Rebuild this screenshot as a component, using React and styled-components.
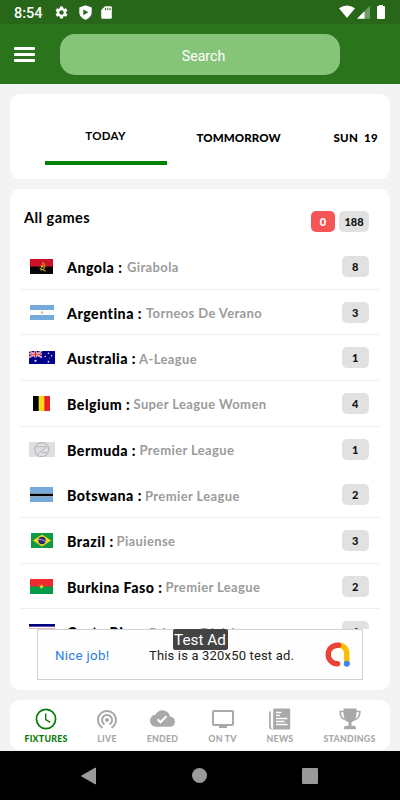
import React from 'react';
import styled, { createGlobalStyle } from 'styled-components';
import { MdSettings, MdCloudDone, MdWifiTethering, MdTv } from 'react-icons/md';

const games = [
  { country: 'Angola', league: 'Girabola', count: 8, flag: 'angola', countryWidth: 56 },
  { country: 'Argentina', league: 'Torneos De Verano', count: 3, flag: 'argentina', countryWidth: 75 },
  { country: 'Australia', league: 'A-League', count: 1, flag: 'australia', countryWidth: 68 },
  { country: 'Belgium', league: 'Super League Women', count: 4, flag: 'belgium', countryWidth: 62.5 },
  { country: 'Bermuda', league: 'Premier League', count: 1, flag: 'none', countryWidth: 68.5, noLine: true },
  { country: 'Botswana', league: 'Premier League', count: 2, flag: 'botswana', countryWidth: 74 },
  { country: 'Brazil', league: 'Piauiense', count: 3, flag: 'brazil', countryWidth: 45.5 },
  { country: 'Burkina Faso', league: 'Premier League', count: 2, flag: 'burkina', countryWidth: 94.5 },
  { country: 'Costa Rica', league: 'Primera Division', count: 4, flag: 'costarica', countryWidth: 78 },
]

const Flag = ({ name }) => {
  switch (name) {
    case 'angola':
      return (
        <svg width="23" height="15" viewBox="0 0 23 15">
          <rect width="23" height="15" fill="#080606" />
          <rect width="23" height="7.5" fill="#ce1126" />
          <path d="M12 3.6a3.7 3.7 0 1 1-1.7 7.200M9.800 9.200l5.800 3" fill="none" stroke="#c99b16" strokeWidth="1.1" />
          <path d="M12.200 5.200l.6 1.300 1.400.1-1 1 .3 1.400-1.300-.7-1.200.7.2-1.400-1-1 1.400-.1z" fill="#e5b51d" />
        </svg>
      )
    case 'argentina':
      return (
        <svg width="24" height="15" viewBox="0 0 24 15">
          <rect width="24" height="15" fill="#75aadb" />
          <rect y="5" width="24" height="5" fill="#fff" />
          <circle cx="12" cy="7.5" r="1.2" fill="#e9b45b" />
        </svg>
      )
    case 'australia':
      return (
        <svg width="26" height="13" viewBox="0 0 26 13">
          <rect width="26" height="13" fill="#00008b" />
          <path d="M0 0l13 6.5M13 0L0 6.5" stroke="#fff" strokeWidth="1.4" />
          <path d="M0 0l13 6.5M13 0L0 6.5" stroke="#d22" strokeWidth=".6" />
          <path d="M6.5 0v6.5M0 3.25h13" stroke="#fff" strokeWidth="2.2" />
          <path d="M6.5 0v6.5M0 3.25h13" stroke="#e01c2c" strokeWidth="1.2" />
          <g fill="#e6e6fa">
            <circle cx="6.5" cy="9.8" r="1.1" />
            <circle cx="19.5" cy="2.3" r=".8" />
            <circle cx="16.3" cy="5.5" r=".8" />
            <circle cx="22.6" cy="4.7" r=".8" />
            <circle cx="20.7" cy="7" r=".5" />
            <circle cx="19.5" cy="10.7" r=".9" />
          </g>
        </svg>
      )
    case 'belgium':
      return (
        <svg width="17" height="15" viewBox="0 0 17 15">
          <rect width="6" height="15" fill="#000" />
          <rect x="5.7" width="6" height="15" fill="#fbdc13" />
          <rect x="11.3" width="5.7" height="15" fill="#ee2023" />
        </svg>
      )
    case 'botswana':
      return (
        <svg width="23" height="15" viewBox="0 0 23 15">
          <rect width="23" height="15" fill="#75aadb" />
          <rect y="6" width="23" height="4" fill="#b9d0e6" />
          <rect y="6.7" width="23" height="2.5" fill="#000" />
        </svg>
      )
    case 'brazil':
      return (
        <svg width="22" height="15" viewBox="0 0 22 15">
          <rect width="22" height="15" fill="#109a43" />
          <path d="M11 1.6l9 5.9-9 5.9-9-5.9z" fill="#f7d823" />
          <circle cx="11" cy="7.5" r="3.7" fill="#2c2a75" />
          <path d="M7.6 6.5q4-.6 6.8 2.2" fill="none" stroke="#c5cde0" strokeWidth=".8" />
        </svg>
      )
    case 'burkina':
      return (
        <svg width="23" height="15" viewBox="0 0 23 15">
          <rect width="23" height="15" fill="#009e49" />
          <rect width="23" height="7.5" fill="#ef2b2d" />
          <path d="M11.5 5l.7 1.8h1.8l-1.4 1.2.5 1.8-1.6-1.1-1.6 1.1.5-1.8L9 6.8h1.8z" fill="#fcd116" />
        </svg>
      )
    case 'costarica':
      return (
        <svg width="26" height="15" viewBox="0 0 26 15">
          <rect width="26" height="15" fill="#00007f" />
          <rect y="2.7" width="26" height="9.6" fill="#fff" />
          <rect y="4.7" width="26" height="5.6" fill="#d90012" />
        </svg>
      )
    default:
      return (
        <svg width="26" height="15" viewBox="0 0 26 15">
          <rect width="26" height="15" fill="#dedfe1" />
          <circle cx="12.8" cy="7.6" r="7" fill="none" stroke="#b7b8ba" strokeWidth="1.2" />
          <path d="M7.400 4.700h10.200L8.300 12.200M12 10.600h6" fill="none" stroke="#b7b8ba" strokeWidth="1" />
        </svg>
      )
  }
}

const ClockIcon = () => (
  <svg width="22" height="22" viewBox="0 0 22 22" fill="none" stroke="currentColor">
    <circle cx="11" cy="11" r="9.6" strokeWidth="1.7" />
    <path d="M10.7 5.6v6l4.6 2.7" strokeWidth="1.4" />
  </svg>
)

const NewsIcon = () => (
  <svg width="22" height="22" viewBox="0 0 22 22">
    <path d="M.9 3.6v15.1c0 1 .8 1.8 1.8 1.8" fill="none" stroke="currentColor" strokeWidth="1.7" />
    <path d="M5.2.5h15a1 1 0 0 1 1 1v18.9a1 1 0 0 1-1 1H3.2a2 2 0 0 0 1-1.7V1.5a1 1 0 0 1 1-1z" fill="currentColor" />
    <path d="M7 4.5h5.5M7 7.3h4M7 10.5h11.5M7 13.5h8.5M7 16.5h11.5" stroke="#fff" strokeWidth="1.3" />
  </svg>
)

const TrophyIcon = () => (
  <svg width="22" height="22" viewBox="0 0 22 22" fill="none" stroke="currentColor">
    <path d="M4.5.6h13v4.2c0 4.500-1.800 8.400-5 9.500v3.500h2.400c1.400 0 2.300 1.200 2.300 3.500H4.800c0-2.300.9-3.500 2.300-3.500h2.400v-3.500c-3.200-1.100-5-5-5-9.500z" fill="currentColor" stroke="none" />
    <path d="M5 3.500H1.100c0 4.300 2 7.500 6 8.500M17 3.500h3.900c0 4.300-2 7.500-6 8.500" strokeWidth="1.6" />
  </svg>
)

const ShieldIcon = () => (
  <svg width="13" height="15" viewBox="0 0 13 15">
    <path d="M6.5.2l6.200 2.400v4.600c0 3.500-2.500 6.200-6.200 7.500C2.800 13.400.3 10.700.3 7.200V2.600z" fill="#fff" />
    <path d="M4.3 4.4v5.800l5-2.900z" fill="#28671a" />
  </svg>
)

const SdIcon = () => (
  <svg width="11" height="13" viewBox="0 0 11 13">
    <path d="M4 .2h5.800q1 0 1 1v10.600q0 1-1 1H1.200q-1 0-1-1V4z" fill="#fff" />
    <path d="M4.600 1.800v2.500M6.800 1.800v2.500M9 1.800v2.500" stroke="#28671a" strokeWidth="1" />
  </svg>
)

const AdLogo = () => (
  <svg width="25" height="25" viewBox="0 0 25 25" fill="none" strokeWidth="5.4" strokeLinecap="round">
    <path d="M14 3.2a7.800 7.800 0 0 1 7.800 7.800v10.500" stroke="#fbbc04" />
    <path d="M13.500 3.200h-1a9.300 9.300 0 0 0 0 18.600" stroke="#ea4335" />
    <circle cx="21.800" cy="21.700" r="3" fill="#4285f4" />
  </svg>
)

const tabs = [
  { label: 'FIXTURES', icon: <ClockIcon />, width: 43, active: true },
  { label: 'LIVE', icon: <MdWifiTethering size={24} />, width: 20 },
  { label: 'ENDED', icon: <MdCloudDone size={25} />, width: 32 },
  { label: 'ON TV', icon: <MdTv size={24} />, width: 29 },
  { label: 'NEWS', icon: <NewsIcon />, width: 27 },
  { label: 'STANDINGS', icon: <TrophyIcon />, width: 53 },
]

const App = () => {
  return (
    <Screen>
      <GlobalStyle />
      <StatusBar>
        <Time>8:54</Time>
        <StatusIcons>
          <MdSettings size={15} />
          <ShieldIcon />
          <SdIcon />
        </StatusIcons>
        <svg width="48" height="15" viewBox="0 0 48 15">
          <path d="M0 3.2Q8 -2 16 3.2L8 13z" fill="#fff" />
          <path d="M31 .8v13H18z" fill="#6f9b66" />
          <path d="M25.5 6.300v7.500H18z" fill="#fff" />
          <path d="M40 1V0h4v1h1q1 0 1 1v11q0 1-1 1h-6q-1 0-1-1V2q0-1 1-1z" fill="#fff" />
        </svg>
      </StatusBar>
      <Header>
        <MenuButton>
          <MenuLine />
          <MenuLine />
          <MenuLine />
        </MenuButton>
        <SearchBox>Search</SearchBox>
      </Header>
      <Content>
        <DaysCard>
          <DayActive>TODAY</DayActive>
          <Day>TOMMORROW</Day>
          <Day>SUN&nbsp; 19</Day>
        </DaysCard>
        <GamesCard>
          <GamesHeader>
            <Title>All games</Title>
            <Badge $live>0</Badge>
            <Badge $wide>188</Badge>
          </GamesHeader>
          <GamesList>
            {games.map((game) => (
              <GameRow key={game.country} $noLine={game.noLine}>
                <FlagBox><Flag name={game.flag} /></FlagBox>
                <Country $width={game.countryWidth}>{game.country} :</Country>
                <League>{game.league}</League>
                <Badge>{game.count}</Badge>
              </GameRow>
            ))}
          </GamesList>
          <Ad>
            <AdLabel>Test Ad</AdLabel>
            <AdPraise>Nice job!</AdPraise>
            <AdText>This is a 320x50 test ad.</AdText>
            <AdLogo />
          </Ad>
        </GamesCard>
        <TabBar>
          {tabs.map((tab) => (
            <Tab key={tab.label} $width={tab.width} $active={tab.active}>
              <TabIcon>{tab.icon}</TabIcon>
              <TabLabel>{tab.label}</TabLabel>
            </Tab>
          ))}
        </TabBar>
      </Content>
      <SystemNav>
        <svg width="15" height="18" viewBox="0 0 15 18"><path d="M14.5 1v16L.5 9z" fill="#9a9a9a" stroke="#9a9a9a" strokeLinejoin="round" /></svg>
        <HomeDot />
        <RecentSquare />
      </SystemNav>
    </Screen>
  )
}

const GlobalStyle = createGlobalStyle`
  * {
    box-sizing: border-box;
  }
  body {
    margin: 0;
    overflow: hidden;
    font-family: Lato, sans-serif;
  }
  svg {
    display: block;
    flex-shrink: 0;
  }
`

const Screen = styled.div`
  width: 400px;
  height: 800px;
  display: flex;
  flex-direction: column;
  background: #f3f3f3;
`

const StatusBar = styled.div`
  height: 24px;
  padding: 1px 13px 0 14px;
  display: flex;
  align-items: center;
  background: #28671a;
  color: #fff;
`

const Time = styled.span`
  width: 40px;
  padding-top: 1px;
  font: 500 14.5px Roboto, sans-serif;
`

const StatusIcons = styled.div`
  flex: 1;
  display: flex;
  align-items: center;
  gap: 9.5px;
`

const Header = styled.div`
  height: 60px;
  padding: 0 14px;
  display: flex;
  align-items: center;
  background: #2a741c;
`

const MenuButton = styled.div`
  width: 46px;
  display: flex;
  flex-direction: column;
  gap: 3px;
`

const MenuLine = styled.div`
  width: 21px;
  height: 3px;
  border-radius: 1px;
  background: #fff;
`

const SearchBox = styled.div`
  width: 280px;
  height: 41px;
  padding: 4px 0 0 7px;
  display: flex;
  align-items: center;
  justify-content: center;
  border-radius: 15px;
  background: #86c47a;
  color: #fff;
  font: 14.2px Roboto, sans-serif;
`

const Content = styled.div`
  height: 667px;
  padding: 10px 10px 0;
  display: flex;
  flex-direction: column;
  gap: 10px;
`

const Card = styled.div`
  flex-shrink: 0;
  border-radius: 10px;
  background: #fff;
`

const DaysCard = styled(Card)`
  height: 85px;
  padding-left: 34.5px;
  display: flex;
  align-items: center;
  overflow: hidden;
  white-space: nowrap;
`

const Day = styled.div`
  width: 137px;
  margin-left: 30px;
  padding-top: 2px;
  color: #000;
  font-size: 11.5px;
  font-weight: 900;
  letter-spacing: .1px;
  flex-shrink: 0;

  & + & {
    margin-left: 0;
    letter-spacing: .25px;
  }
`

const DayActive = styled.div`
  width: 122px;
  height: 54px;
  margin-bottom: -2px;
  padding-top: 18px;
  border-bottom: 4px solid #008000;
  font-size: 11.5px;
  font-weight: 700;
  letter-spacing: .3px;
  text-align: center;
  flex-shrink: 0;
`

const GamesCard = styled(Card)`
  height: 501px;
  display: flex;
  flex-direction: column;
`

const GamesHeader = styled.div`
  height: 55px;
  padding: 9px 21px 0 14px;
  display: flex;
  align-items: center;
  gap: 4px;
`

const Title = styled.div`
  flex: 1;
  margin-top: -7px;
  font-size: 14.5px;
  font-weight: 700;
  letter-spacing: .45px;
`

const Badge = styled.div`
  width: ${props => props.$live ? '24px' : props.$wide ? '30px' : '26.5px'};
  height: 21px;
  display: flex;
  align-items: center;
  justify-content: center;
  border-radius: 5px;
  background: ${props => props.$live ? '#f65555' : '#e1e1e1'};
  color: ${props => props.$live ? '#fff' : '#111'};
  font-size: 11px;
  font-weight: 900;
  flex-shrink: 0;
`

const GamesList = styled.div`
  height: 385px;
  overflow: hidden;
`

const GameRow = styled.div`
  height: 45.68px;
  margin: 0 10px;
  padding-right: 11.5px;
  display: flex;
  align-items: center;
  border-bottom: 1px solid ${props => props.$noLine ? 'transparent' : '#efefef'};
  white-space: nowrap;
`

const FlagBox = styled.div`
  width: 43px;
  height: 15px;
  margin-right: 4px;
  display: flex;
  align-items: center;
  justify-content: center;
`

const Country = styled.div`
  width: ${props => props.$width + 4}px;
  padding-top: 2px;
  color: #000;
  font-size: 14.2px;
  font-weight: 900;
  letter-spacing: .48px;
`

const League = styled.div`
  flex: 1;
  padding-top: 2px;
  color: #9b9b9b;
  font-size: 13px;
  font-weight: 700;
  letter-spacing: .38px;
`

const Ad = styled.div`
  position: relative;
  width: 326px;
  height: 51px;
  margin: 0 auto;
  padding: 0 12px 0 17px;
  display: flex;
  align-items: center;
  border: 1px solid #ccd4d8;
  background: #fefefe;
  font-family: Roboto, sans-serif;
`

const AdLabel = styled.div`
  position: absolute;
  top: -1px;
  left: 134.5px;
  width: 55px;
  height: 21px;
  border-radius: 2px;
  background: #444;
  color: #fff;
  font-size: 15.3px;
  line-height: 22px;
  text-align: center;
`

const AdPraise = styled.div`
  width: 94px;
  padding-top: 2px;
  color: #2b7de9;
  font-size: 13.3px;
  letter-spacing: .3px;
`

const AdText = styled.div`
  flex: 1;
  padding-top: 2px;
  color: #222;
  font-size: 13px;
  letter-spacing: .17px;
  white-space: nowrap;
`

const TabBar = styled(Card)`
  height: 50px;
  padding-left: 14.5px;
  display: flex;
  gap: 29.5px;
`

const Tab = styled.div`
  width: ${props => props.$width}px;
  display: flex;
  flex-direction: column;
  align-items: center;
  color: ${props => props.$active ? '#087a08' : '#a9a9a9'};
`

const TabIcon = styled.div`
  height: 33px;
  padding-top: 4px;
  display: flex;
  align-items: center;
`

const TabLabel = styled.div`
  font-size: 8.8px;
  font-weight: 900;
  line-height: 11px;
  letter-spacing: .25px;
  white-space: nowrap;
`

const SystemNav = styled.div`
  height: 49px;
  padding: 0 82px 0 81px;
  display: flex;
  align-items: center;
  justify-content: space-between;
  background: #000;
`

const HomeDot = styled.div`
  width: 15px;
  height: 15px;
  border-radius: 50%;
  background: #9a9a9a;
`

const RecentSquare = styled.div`
  width: 16px;
  height: 16px;
  border-radius: 1px;
  background: #9a9a9a;
`

export default App;
